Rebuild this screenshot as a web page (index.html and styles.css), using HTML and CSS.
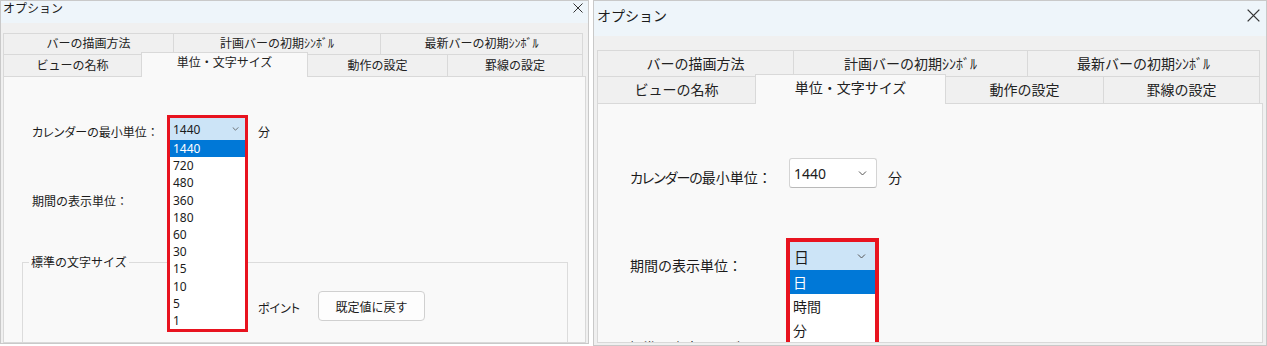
FILE: index.html
```html
<!DOCTYPE html>
<html lang="ja">
  <head>
    <meta charset="UTF-8" />
    <meta name="viewport" content="width=device-width, initial-scale=1.0" />
    <title>オプション</title>
    <link rel="stylesheet" href="styles.css">
  </head>
  <body>
    <div class="shots">

      <!-- 左: カレンダーの最小単位を開いた状態 -->
      <section class="win win-a">
        <div class="titlebar">
          <span class="title">オプション</span>
          <svg class="close" viewBox="0 0 10 10"><path d="M0.5 0.5L9.5 9.5M9.5 0.5L0.5 9.5"/></svg>
        </div>
        <div class="tabs">
          <div class="tabrow row-top">
            <div class="tab">バーの描画方法</div>
            <div class="tab">計画バーの初期ｼﾝﾎﾞﾙ</div>
            <div class="tab">最新バーの初期ｼﾝﾎﾞﾙ</div>
          </div>
          <div class="tabrow row-bottom">
            <div class="tab">ビューの名称</div>
            <div class="tab active">単位・文字サイズ</div>
            <div class="tab">動作の設定</div>
            <div class="tab">罫線の設定</div>
          </div>
        </div>
        <div class="pane">
          <div class="field">
            <span class="label"><span class="kana">カレンダーの</span>最小単位：</span>
            <div class="combo"><span>1440</span><svg class="chev" viewBox="0 0 8 5"><path d="M0.5 0.5L4 4L7.5 0.5"/></svg></div>
            <span class="unit">分</span>
          </div>
          <div class="field">
            <span class="label">期間の表示単位：</span>
            <div class="combo"><span></span><svg class="chev" viewBox="0 0 8 5"><path d="M0.5 0.5L4 4L7.5 0.5"/></svg></div>
          </div>
          <fieldset class="group">
            <legend>標準の文字サイズ</legend>
            <div class="size-row">
              <div class="spin"></div>
              <span class="unit kana">ポイント</span>
              <button class="btn">既定値に戻す</button>
            </div>
          </fieldset>

          <div class="dropdown">
            <div class="combo"><span>1440</span><svg class="chev" viewBox="0 0 8 5"><path d="M0.5 0.5L4 4L7.5 0.5"/></svg></div>
            <ul class="list">
              <li class="sel">1440</li>
              <li>720</li>
              <li>480</li>
              <li>360</li>
              <li>180</li>
              <li>60</li>
              <li>30</li>
              <li>15</li>
              <li>10</li>
              <li>5</li>
              <li>1</li>
            </ul>
          </div>
        </div>
      </section>

      <!-- 右: 期間の表示単位を開いた状態 -->
      <section class="win win-b">
        <div class="titlebar">
          <span class="title">オプション</span>
          <svg class="close" viewBox="0 0 10 10"><path d="M0.5 0.5L9.5 9.5M9.5 0.5L0.5 9.5"/></svg>
        </div>
        <div class="tabs">
          <div class="tabrow row-top">
            <div class="tab">バーの描画方法</div>
            <div class="tab">計画バーの初期ｼﾝﾎﾞﾙ</div>
            <div class="tab">最新バーの初期ｼﾝﾎﾞﾙ</div>
          </div>
          <div class="tabrow row-bottom">
            <div class="tab">ビューの名称</div>
            <div class="tab active">単位・文字サイズ</div>
            <div class="tab">動作の設定</div>
            <div class="tab">罫線の設定</div>
          </div>
        </div>
        <div class="pane">
          <div class="field">
            <span class="label"><span class="kana">カレンダーの</span>最小単位：</span>
            <div class="combo"><span>1440</span><svg class="chev" viewBox="0 0 8 5"><path d="M0.5 0.5L4 4L7.5 0.5"/></svg></div>
            <span class="unit">分</span>
          </div>
          <div class="field">
            <span class="label">期間の表示単位：</span>
            <div class="combo"><span></span><svg class="chev" viewBox="0 0 8 5"><path d="M0.5 0.5L4 4L7.5 0.5"/></svg></div>
          </div>
          <fieldset class="group">
            <legend>標準の文字サイズ</legend>
          </fieldset>

          <div class="dropdown">
            <div class="combo"><span>日</span><svg class="chev" viewBox="0 0 8 5"><path d="M0.5 0.5L4 4L7.5 0.5"/></svg></div>
            <ul class="list">
              <li class="sel">日</li>
              <li>時間</li>
              <li>分</li>
            </ul>
          </div>
        </div>
      </section>

    </div>
  </body>
</html>
```

FILE: styles.css
```css
*{
    box-sizing: border-box;
}
body{
    margin: 0;
    background: #ffffff;
    font-family: "Noto Sans", "Noto Sans CJK JP", sans-serif;
    color: #1b1b1b;
}
.shots{
    display: flex;
    align-items: flex-start;
    gap: 4px;
}

/* ウィンドウ */
.win{
    display: flex;
    flex-direction: column;
    background: #f0f0f0;
    border: 1px solid #c9c9c9;
    overflow: hidden;
}
.win-a{
    width: 589px;
    height: 344px;
    font-size: 12px;
}
.win-b{
    width: 674px;
    height: 346px;
    font-size: 14px;
}

.titlebar{
    flex: none;
    display: flex;
    justify-content: space-between;
    align-items: flex-start;
    background: #eef5fa;
}
.title{
    font-family: "Noto Sans CJK JP", sans-serif;
}
.close{
    fill: none;
    stroke: #333333;
    stroke-width: 1;
}
.win-a .titlebar{
    height: 22px;
    padding: 0 5px 0 2px;
}
.win-a .title{
    line-height: 14px;
}
.win-a .close{
    width: 10px;
    height: 10px;
    margin-top: 2px;
}
.win-b .titlebar{
    height: 35px;
    padding: 4px 6px 0 3px;
}
.win-b .title{
    line-height: 20px;
}
.win-b .close{
    width: 13px;
    height: 13px;
    margin-top: 4px;
}

/* タブ */
.tabrow{
    display: grid;
}
.tab{
    display: flex;
    align-items: center;
    justify-content: center;
    white-space: nowrap;
    line-height: 1;
    color: #222222;
    background: #f0f0f0;
    border-top: 1px solid #d9d9d9;
    border-left: 1px solid #d9d9d9;
}
.tab:last-child{
    border-right: 1px solid #d9d9d9;
}
.tab.active{
    position: relative;
    z-index: 1;
    margin: -2px 0 -1px;
    padding-bottom: 4px;
    background: #f9f9f9;
    border-right: 1px solid #d9d9d9;
}
.tab.active + .tab{
    border-left: none;
}
.win-a .tabs{
    margin: 10px 0 0 2px;
}
.win-a .row-top{
    grid-template-columns: 170px 207px 203px;
    height: 21px;
}
.win-a .row-bottom{
    grid-template-columns: 138px 167px 139px 136px;
    height: 22px;
}
.win-b .tabs{
    margin: 14px 0 0 3px;
}
.win-b .row-top{
    grid-template-columns: 196px 234px 233px;
    height: 26px;
}
.win-b .row-bottom{
    grid-template-columns: 158px 191px 157px 157px;
    height: 27px;
}

/* 内容 */
.pane{
    flex: 1;
    position: relative;
    overflow: hidden;
    background: #f9f9f9;
    border: 1px solid #d9d9d9;
}
.win-a .pane{
    margin: 0 2px;
    padding: 41px 17px 0 18px;
}
.win-b .pane{
    margin: 0 3px 2px;
    padding: 54px 20px 0 22px;
}
.field{
    display: flex;
    align-items: center;
    padding-left: 10px;
}
.label, .unit, legend{
    font-family: "Noto Sans CJK JP", sans-serif;
    white-space: nowrap;
}
.kana{
    font-feature-settings: "palt";
}
.win-b .label .kana{
    letter-spacing: -1px;
}
.win-a .field{
    height: 21px;
}
.win-a .field + .field{
    margin-top: 48px;
}
.win-a .label{
    width: 138px;
    padding-top: 5px;
}
.win-a .field .unit{
    margin-left: 13px;
    padding-top: 5px;
}
.win-b .field{
    height: 30px;
}
.win-b .field + .field{
    margin-top: 58px;
}
.win-b .label{
    width: 159px;
    padding-top: 8px;
}
.win-b .field .unit{
    margin-left: 11px;
    padding-top: 8px;
}

.combo{
    display: flex;
    align-items: center;
    justify-content: space-between;
    background: #ffffff;
    border: 1px solid #d4d4d4;
    border-bottom-color: #b9b9b9;
    border-radius: 3px;
}
.chev{
    fill: none;
    stroke: #555555;
    stroke-width: 1;
}
.win-a .combo{
    width: 75px;
    height: 22px;
    padding: 0 6px 0 3px;
}
.win-a .chev{
    width: 7px;
    height: 4px;
}
.win-b .combo{
    width: 88px;
    height: 30px;
    padding: 0 9px 0 4px;
}
.win-b .chev{
    width: 9px;
    height: 5px;
}

/* 標準の文字サイズ */
.group{
    margin: 0;
    padding: 0;
    min-width: 0;
    height: 120px;
    border: 1px solid #dcdcdc;
}
.group legend{
    padding: 0 2px;
    margin-left: 6px;
}
.win-a .group{
    margin-top: 46px;
}
.win-a .group legend{
    line-height: 16px;
}
.win-b .group{
    margin-top: 61px;
}
.win-b .group legend{
    line-height: 20px;
}
.size-row{
    display: flex;
    align-items: center;
    height: 30px;
    margin: 21px 0 0 147px;
}
.spin{
    width: 75px;
    height: 22px;
    background: #ffffff;
    border: 1px solid #d4d4d4;
}
.size-row .unit{
    margin-left: 13px;
    padding-top: 3px;
}
.btn{
    width: 107px;
    height: 30px;
    margin-left: 18px;
    font: inherit;
    font-family: "Noto Sans CJK JP", sans-serif;
    color: #1b1b1b;
    background: #fdfdfd;
    border: 1px solid #d0d0d0;
    border-radius: 4px;
}

/* 開いたドロップダウン */
.dropdown{
    position: absolute;
    z-index: 2;
    background: #ffffff;
    border: 3px solid #e8131f;
}
.dropdown .combo{
    width: auto;
    border: none;
    border-radius: 0;
    background: #cce4f7;
}
.list{
    list-style: none;
    margin: 0;
    padding: 0;
}
.list li{
    padding-left: 3px;
    color: #1b1b1b;
}
.list li.sel{
    background: #0078d7;
    color: #ffffff;
}
.win-a .dropdown{
    left: 163px;
    top: 38px;
    width: 81px;
    height: 217px;
}
.win-a .list li{
    height: 17.2px;
    line-height: 17.2px;
}
.win-b .dropdown{
    left: 188px;
    top: 134px;
    width: 93px;
    height: 120px;
    border-width: 4px;
}
.win-b .dropdown .combo{
    height: 28px;
    font-size: 15px;
    font-family: "Noto Sans CJK JP", sans-serif;
}
.win-b .list li{
    height: 24px;
    line-height: 24px;
    font-family: "Noto Sans CJK JP", sans-serif;
}
```
